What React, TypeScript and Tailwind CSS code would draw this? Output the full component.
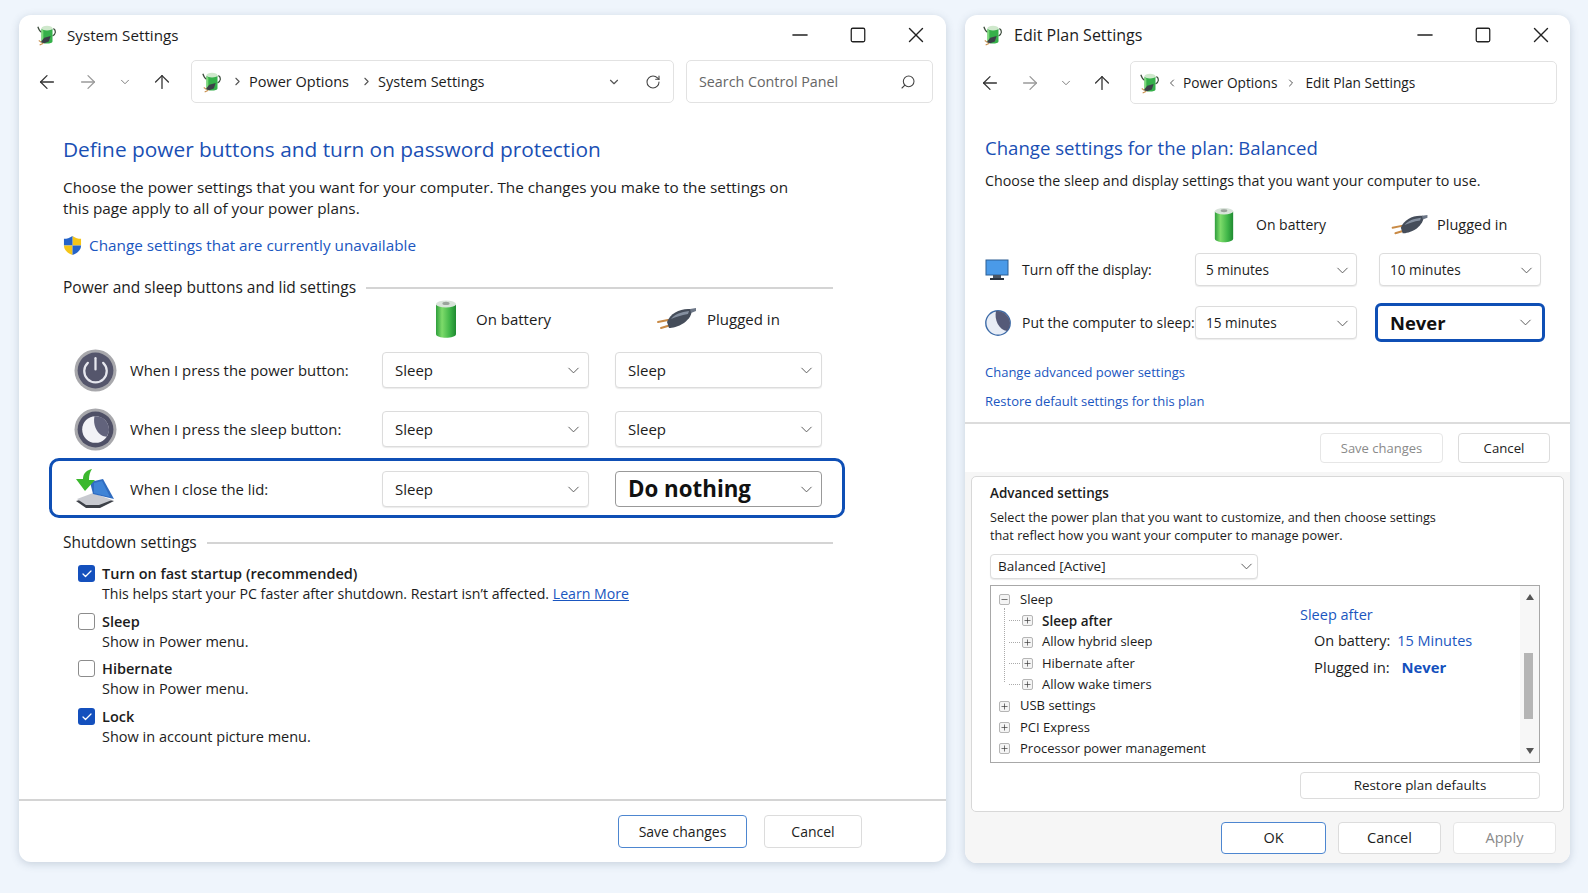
import { ChevronDown, RotateCw, Search, Minus, Square, X, ArrowLeft, ArrowRight, ArrowUp, ChevronRight, ChevronLeft, Check, Plus } from "lucide-react";
import type { ReactNode } from "react";

function AppIcon({ className }: { className?: string }) {
  return (
    <svg viewBox="0 0 24 24" className={className}>
      <path d="M2 3c1 3 2 5 4 6" stroke="#3a4a3a" strokeWidth="1.3" fill="none" />
      <path d="M19 5c3 2 3 6-1 8" stroke="#3a4a3a" strokeWidth="1.3" fill="none" />
      <path d="M6 5c0 1.5 12 1.5 12 0v14c0 3-12 3-12 0z" fill="#35b04a" />
      <path d="M6 6v13c0 1 1 1.6 2 2V7z" fill="#7cd97a" />
      <ellipse cx="12" cy="4.5" rx="6" ry="2.6" fill="#cfe8cc" />
      <path d="M5 20l4-5 7-2-2 6-5 2z" fill="#3b4048" />
      <path d="M3 18l3 2M4 23l4-2" stroke="#c9904f" strokeWidth="1.2" />
    </svg>
  );
}

function BatteryIcon({ className }: { className?: string }) {
  return (
    <svg viewBox="0 0 24 40" className={className}>
      <defs>
        <linearGradient id="batt" x1="0" x2="1" y1="0" y2="0">
          <stop offset="0" stopColor="#2f9e3c" />
          <stop offset="0.3" stopColor="#7ddb6a" />
          <stop offset="0.7" stopColor="#3fb548" />
          <stop offset="1" stopColor="#1f8a31" />
        </linearGradient>
      </defs>
      <path d="M2 5c0 3 20 3 20 0v30c0 5-20 5-20 0z" fill="url(#batt)" />
      <ellipse cx="12" cy="5" rx="10" ry="3.6" fill="#d9e3da" />
      <ellipse cx="12" cy="4.4" rx="3.6" ry="1.6" fill="#9aa39b" />
    </svg>
  );
}

function PlugIcon({ className }: { className?: string }) {
  return (
    <svg viewBox="0 0 40 24" className={className}>
      <path d="M1 15l10-2M4 21l10-3" stroke="#c98a45" strokeWidth="2" strokeLinecap="round" />
      <path d="M10 15C13 7 22 2 31 2h3c2 5-2 10-7 14-6 4-12 5-15 5z" fill="#454d5a" />
      <path d="M14 12c4-5 10-7 18-8l-1 3c-7 1-12 3-17 5z" fill="#8590a0" />
      <path d="M33 2l6-1v3l-5 2z" fill="#6c7686" />
    </svg>
  );
}

function PowerIcon({ className }: { className?: string }) {
  return (
    <svg viewBox="0 0 42 42" className={className}>
      <circle cx="21" cy="21" r="20.5" fill="#a8a8ac" />
      <circle cx="21" cy="21" r="17.5" fill="#55566c" />
      <path d="M13.5 13.5a11 11 0 1 0 15 0" stroke="#e6e7ee" strokeWidth="2.2" fill="none" strokeLinecap="round" />
      <path d="M21 9v11" stroke="#e6e7ee" strokeWidth="2.2" strokeLinecap="round" />
    </svg>
  );
}

function MoonBadge({ className }: { className?: string }) {
  return (
    <svg viewBox="0 0 42 42" className={className}>
      <circle cx="21" cy="21" r="20.5" fill="#a8a8ac" />
      <circle cx="21" cy="21" r="17.5" fill="#4f5066" />
      <circle cx="21" cy="21" r="13" fill="#f2f2f6" />
      <path d="M20 8a13 13 0 0 1 12 20C24 28 18 18 20 8z" fill="#62637c" />
    </svg>
  );
}

function LidIcon({ className }: { className?: string }) {
  return (
    <svg viewBox="0 0 42 40" className={className}>
      <path d="M2 32l18-5 20 5-14 7H12z" fill="#3d4148" />
      <path d="M3 30l16-6 19 7-13 5H12z" fill="#c8cad0" />
      <path d="M16 13l13-3 11 20-21-5z" fill="#2f6cc0" />
      <path d="M20 14l8-2 8 16-16-4z" fill="#3f84d6" />
      <path d="M18 0c-5 1-9 4-9 10H2l9 12 10-11h-6c0-5 1-8 3-11z" fill="#3bb82e" />
    </svg>
  );
}

function ShieldIcon({ className }: { className?: string }) {
  return (
    <svg viewBox="0 0 20 22" className={className}>
      <path d="M10 1c3 2 6 3 9 3v7H10z" fill="#f5c518" />
      <path d="M10 1C7 3 4 4 1 4v7h9z" fill="#2563c9" />
      <path d="M1 11c0 5 4 8 9 10V11z" fill="#f5c518" />
      <path d="M19 11c0 5-4 8-9 10V11z" fill="#2563c9" />
    </svg>
  );
}

function MonitorIcon({ className }: { className?: string }) {
  return (
    <svg viewBox="0 0 24 22" className={className}>
      <rect x="1" y="1" width="22" height="15" fill="#4a9ae8" stroke="#2c5f94" />
      <path d="M8 16h8v3H8z" fill="#4a5563" />
      <path d="M5 19h14v2H5z" fill="#2a3340" />
    </svg>
  );
}

function MoonSmall({ className }: { className?: string }) {
  return (
    <svg viewBox="0 0 26 26" className={className}>
      <circle cx="13" cy="13" r="12.2" fill="#e8edf6" stroke="#3e6ca8" strokeWidth="1.4" />
      <path d="M11 1c7-1 14 5 14 12 0 3-1 6-3 8C14 20 9 10 11 1z" fill="#555a78" />
    </svg>
  );
}

function WindowControls() {
  return (
    <div className="flex items-center text-[#222]">
      <div className="w-[58px] flex justify-center"><Minus className="w-[24px] h-[24px]" strokeWidth={1.6} /></div>
      <div className="w-[58px] flex justify-center"><Square className="w-[18px] h-[18px]" strokeWidth={1.7} /></div>
      <div className="w-[58px] flex justify-center"><X className="w-[26px] h-[26px]" strokeWidth={1.3} /></div>
    </div>
  );
}

function NavArrows({ gap }: { gap: string }) {
  return (
    <div className={`flex items-center text-[#333] ${gap}`}>
      <ArrowLeft className="w-[22px] h-[22px]" strokeWidth={1.4} />
      <ArrowRight className="w-[22px] h-[22px] text-[#9a9a9a]" strokeWidth={1.4} />
      <ChevronDown className="w-[14px] h-[14px] text-[#777]" strokeWidth={1.6} />
      <ArrowUp className="w-[22px] h-[22px]" strokeWidth={1.4} />
    </div>
  );
}

function Dropdown({ value, w, h = "h-[36px]", px = "pl-[12px]", pr = "pr-[5px]", text = "text-[15px]" }: { value: string; w: string; h?: string; px?: string; pr?: string; text?: string }) {
  return (
    <div className={`flex items-center justify-between ${w} ${h} ${px} ${pr} ${text} bg-white border border-[#dcdcdc] rounded-[4px] shadow-[0_1px_1px_rgba(0,0,0,0.08)] text-[#1c1c1c]`}>
      <span>{value}</span>
      <ChevronDown className="w-[19px] h-[19px] text-[#555]" strokeWidth={1.2} />
    </div>
  );
}

function PowerRow({ icon, label, first, second }: { icon: ReactNode; label: string; first: string; second?: ReactNode }) {
  return (
    <div className="flex items-center h-[36px]">
      <div className="w-[78px] h-[36px] flex items-center justify-center pl-[8px]">{icon}</div>
      <div className="w-[252px] text-[14.85px] text-[#1c1c1c]">{label}</div>
      <Dropdown value={first} w="w-[207px]" />
      <div className="w-[26px]" />
      {second ?? <Dropdown value="Sleep" w="w-[207px]" />}
    </div>
  );
}

function SectionHead({ title }: { title: string }) {
  return (
    <div className="flex items-center h-[20px] text-[15.5px] text-[#1c1c1c]">
      <span>{title}</span>
      <div className="flex-1 h-[2px] bg-[#d4d4d4] ml-[10px]" />
    </div>
  );
}

function CheckRow({ on, title, children }: { on?: boolean; title: string; children: ReactNode }) {
  return (
    <div className="flex">
      <div className={`w-[17px] h-[17px] mt-[1px] rounded-[3px] flex items-center justify-center ${on ? "bg-[#1450bd]" : "bg-white border border-[#8c8c8c]"}`}>
        {on && <Check className="w-[12px] h-[12px] text-white" strokeWidth={2.5} />}
      </div>
      <div className="ml-[7px] text-[14.5px] leading-[20px] text-[#1c1c1c]">
        <div className="font-semibold">{title}</div>
        <div>{children}</div>
      </div>
    </div>
  );
}

function Btn({ label, w, h, text = "text-[14px]", variant = "normal" }: { label: string; w: string; h: string; text?: string; variant?: "normal" | "primary" | "disabled" }) {
  const look =
    variant === "primary"
      ? "border-[1.5px] border-[#4d86d0] text-[#1c1c1c]"
      : variant === "disabled"
        ? "border border-[#e6e6e6] bg-[#fafafa] text-[#8a8a8a]"
        : "border border-[#dcdcdc] text-[#1c1c1c]";
  return <div className={`flex items-center justify-center rounded-[4px] bg-white ${text} ${w} ${h} ${look}`}>{label}</div>;
}

function TreeBox({ open }: { open?: boolean }) {
  return (
    <div className="w-[11px] h-[11px] border border-[#b5b5b5] bg-[#f4f4f4] rounded-[2px] flex items-center justify-center text-[#333]">
      {open ? <Minus className="w-[9px] h-[9px]" strokeWidth={1.8} /> : <Plus className="w-[9px] h-[9px]" strokeWidth={1.8} />}
    </div>
  );
}

function TreeRow({ label, child, bold, open }: { label: string; child?: boolean; bold?: boolean; open?: boolean }) {
  return (
    <div className={`flex items-center h-[21.3px] ${child ? "pl-[31px]" : "pl-[8px]"}`}>
      {child && <div className="w-[11px] -ml-[13px] mr-[2px] border-t border-dotted border-[#aaa]" />}
      <TreeBox open={open} />
      <span className={`${child ? "ml-[9px]" : "ml-[10px]"} ${bold ? "text-[13.5px] font-semibold" : "text-[13px]"} text-[#1c1c1c]`}>{label}</span>
    </div>
  );
}

function SystemSettings() {
  return (
    <div className="w-[927px] h-[847px] bg-white rounded-[12px] shadow-[0_2px_8px_rgba(60,80,110,0.22)] flex flex-col">
      <div className="h-[40px] flex items-center justify-between pl-[17px] pr-[1px]">
        <div className="flex items-center pt-[1px]">
          <AppIcon className="w-[22px] h-[22px]" />
          <span className="ml-[9px] text-[15.2px] text-[#1c1c1c]">System Settings</span>
        </div>
        <WindowControls />
      </div>
      <div className="mt-[5px] h-[43px] flex items-center pl-[17px] pr-[13px]">
        <NavArrows gap="gap-[19px]" />
        <div className="ml-[18px] w-[483px] h-[43px] flex items-center border border-[#e2e2e2] rounded-[5px] pl-[9px] pr-[12px] text-[14.5px] text-[#1c1c1c]">
          <AppIcon className="w-[22px] h-[22px]" />
          <ChevronRight className="w-[13px] h-[13px] ml-[8px] text-[#555]" />
          <span className="ml-[5px]">Power Options</span>
          <ChevronRight className="w-[13px] h-[13px] ml-[11px] text-[#555]" />
          <span className="ml-[5px]">System Settings</span>
          <ChevronDown className="w-[14px] h-[14px] ml-auto text-[#555]" />
          <RotateCw className="w-[16px] h-[16px] ml-[24px] text-[#444]" strokeWidth={1.6} />
        </div>
        <div className="ml-[12px] flex-1 h-[43px] flex items-center justify-between border border-[#e2e2e2] rounded-[5px] pl-[12px] pr-[16px] text-[14.3px] text-[#666]">
          <span>Search Control Panel</span>
          <Search className="w-[16px] h-[16px] text-[#444] -scale-x-100" strokeWidth={1.6} />
        </div>
      </div>
      <div className="pl-[44px] pr-[113px]">
        <h1 className="mt-[31px] text-[20.85px] leading-[30px] text-[#1a4fb4]">Define power buttons and turn on password protection</h1>
        <p className="mt-[13px] text-[15.3px] leading-[21px] text-[#1c1c1c] w-[735px]">
          Choose the power settings that you want for your computer. The changes you make to the settings on this page apply to all of your power plans.
        </p>
        <div className="mt-[14px] h-[24px] flex items-center text-[15.3px] text-[#1a56c0]">
          <ShieldIcon className="w-[19px] h-[21px] mr-[7px]" />
          Change settings that are currently unavailable
        </div>
        <div className="mt-[21px]">
          <SectionHead title="Power and sleep buttons and lid settings" />
        </div>
        <div className="mt-[2px] h-[38px] flex items-center text-[15px] text-[#1c1c1c]">
          <div className="ml-[371px] w-[24px]"><BatteryIcon className="w-[24px] h-[40px]" /></div>
          <span className="ml-[18px]">On battery</span>
          <PlugIcon className="w-[42px] h-[24px] ml-[105px]" />
          <span className="ml-[9px]">Plugged in</span>
        </div>
      </div>
      <div className="ml-[30px] w-[796px] mt-[14px] flex flex-col">
        <div className="pl-[3px]"><PowerRow icon={<PowerIcon className="w-[43px] h-[43px] shrink-0" />} label="When I press the power button:" first="Sleep" /></div>
        <div className="pl-[3px] mt-[23px]"><PowerRow icon={<MoonBadge className="w-[43px] h-[43px] shrink-0" />} label="When I press the sleep button:" first="Sleep" /></div>
        <div className="mt-[11px] h-[60px] border-[3px] border-[#0f4fb5] rounded-[10px] pt-[10px]">
          <PowerRow
            icon={<LidIcon className="w-[42px] h-[40px] shrink-0" />}
            label="When I close the lid:"
            first="Sleep"
            second={
              <div className="flex items-center justify-between w-[207px] h-[36px] pl-[12px] pr-[5px] bg-white border border-[#999] rounded-[4px]">
                <span className="text-[22.3px] font-bold text-[#111]">Do nothing</span>
                <ChevronDown className="w-[19px] h-[19px] text-[#555]" strokeWidth={1.2} />
              </div>
            }
          />
        </div>
      </div>
      <div className="pl-[44px] pr-[113px] mt-[15px]">
        <SectionHead title="Shutdown settings" />
        <div className="mt-[11px] pl-[15px] flex flex-col gap-[7.7px]">
          <CheckRow on title="Turn on fast startup (recommended)">
            <span className="text-[14.15px]">
              This helps start your PC faster after shutdown. Restart isn’t affected.{" "}
              <span className="text-[#1a56c0] underline">Learn More</span>
            </span>
          </CheckRow>
          <CheckRow title="Sleep">Show in Power menu.</CheckRow>
          <CheckRow title="Hibernate">Show in Power menu.</CheckRow>
          <CheckRow on title="Lock">Show in account picture menu.</CheckRow>
        </div>
      </div>
      <div className="mt-auto h-[63px] border-t-2 border-[#d4d4d4] flex justify-end items-start pt-[14px] pr-[84px] gap-[17px]">
        <Btn label="Save changes" w="w-[129px]" h="h-[33px]" variant="primary" />
        <Btn label="Cancel" w="w-[98px]" h="h-[33px]" />
      </div>
    </div>
  );
}

function EditPlan() {
  return (
    <div className="w-[605px] h-[848px] bg-white rounded-[12px] shadow-[0_2px_8px_rgba(60,80,110,0.22)] flex flex-col overflow-hidden">
      <div className="h-[40px] flex items-center justify-between pl-[17px]">
        <div className="flex items-center">
          <AppIcon className="w-[22px] h-[22px]" />
          <span className="ml-[10px] text-[16px] text-[#1c1c1c]">Edit Plan Settings</span>
        </div>
        <WindowControls />
      </div>
      <div className="mt-[6px] h-[43px] flex items-center pl-[14px] pr-[13px]">
        <NavArrows gap="gap-[18px]" />
        <div className="ml-[17px] flex-1 h-[43px] flex items-center border border-[#e2e2e2] rounded-[5px] pl-[8px] pt-[1px] text-[13.7px] text-[#1c1c1c]">
          <AppIcon className="w-[22px] h-[22px]" />
          <ChevronLeft className="w-[12px] h-[12px] ml-[5px] text-[#555]" />
          <span className="ml-[5px]">Power Options</span>
          <ChevronRight className="w-[12px] h-[12px] ml-[8px] text-[#555]" />
          <span className="ml-[8px]">Edit Plan Settings</span>
        </div>
      </div>
      <div className="pl-[20px] text-[#1c1c1c]">
        <h2 className="mt-[30px] text-[18.6px] leading-[28px] text-[#1a4fb4]">Change settings for the plan: Balanced</h2>
        <p className="mt-[9px] text-[14.27px] leading-[20px]">Choose the sleep and display settings that you want your computer to use.</p>
        <div className="mt-[16px] h-[35px] flex items-center text-[14px]">
          <BatteryIcon className="w-[22px] h-[38px] ml-[228px]" />
          <span className="ml-[21px]">On battery</span>
          <PlugIcon className="w-[38px] h-[22px] ml-[65px]" />
          <span className="ml-[8px] text-[14.5px]">Plugged in</span>
        </div>
        <div className="mt-[11px] flex items-center">
          <MonitorIcon className="w-[24px] h-[22px]" />
          <span className="ml-[13px] w-[173px] pt-[2px] text-[13.95px]">Turn off the display:</span>
          <Dropdown value="5 minutes" w="w-[162px]" h="h-[33px] pt-[2px]" px="pl-[10px]" pr="pr-[4px]" text="text-[13.6px]" />
          <div className="w-[22px]" />
          <Dropdown value="10 minutes" w="w-[162px]" h="h-[33px] pt-[2px]" px="pl-[10px]" pr="pr-[4px]" text="text-[13.6px]" />
        </div>
        <div className="mt-[20px] flex items-center">
          <MoonSmall className="w-[26px] h-[26px]" />
          <span className="ml-[11px] w-[173px] pt-[1px] text-[13.95px] whitespace-nowrap">Put the computer to sleep:</span>
          <Dropdown value="15 minutes" w="w-[162px]" h="h-[33px] pt-[1px]" px="pl-[10px]" pr="pr-[4px]" text="text-[13.6px]" />
          <div className="w-[22px]" />
          <div className="-mx-[4px] -my-[3px] flex items-center justify-between w-[170px] h-[39px] pl-[12px] pr-[7px] bg-white border-[3px] border-[#0f4fb5] rounded-[6px]">
            <span className="text-[18.4px] font-bold text-[#111]">Never</span>
            <ChevronDown className="w-[19px] h-[19px] text-[#555]" strokeWidth={1.2} />
          </div>
        </div>
        <div className="mt-[23px] h-[20px] text-[13px] leading-[20px] text-[#1a56c0]">Change advanced power settings</div>
        <div className="mt-[9px] h-[20px] text-[13px] leading-[20px] text-[#1a56c0]">Restore default settings for this plan</div>
      </div>
      <div className="mt-[11px] h-[50px] border-t-2 border-[#dcdcdc] flex justify-end pt-[9px] pr-[20px] gap-[15px]">
        <Btn label="Save changes" w="w-[123px]" h="h-[30px] pt-[1px]" text="text-[13px]" variant="disabled" />
        <Btn label="Cancel" w="w-[92px]" h="h-[30px] pt-[1px]" text="text-[13.2px]" />
      </div>
      <div className="flex-1 bg-[#f6f6f6] px-[6px] pt-[4px] flex flex-col">
        <div className="h-[336px] bg-white border border-[#d8d8d8] rounded-[5px] pl-[18px] pr-[23px] pt-[6px] text-[#1c1c1c]">
          <div className="text-[13.5px] font-semibold leading-[20px]">Advanced settings</div>
          <p className="mt-[5px] text-[12.7px] leading-[18px] w-[450px]">
            Select the power plan that you want to customize, and then choose settings that reflect how you want your computer to manage power.
          </p>
          <Dropdown value="Balanced [Active]" w="w-[268px] mt-[10px]" h="h-[25px]" px="pl-[7px]" pr="pr-[1px]" text="text-[13.5px]" />
          <div className="mt-[6px] h-[178px] border border-[#a8a8a8] flex relative">
            <div className="flex-1 pt-[3px] relative">
              <div className="absolute left-[13px] top-[22px] h-[74px] border-l border-dotted border-[#aaa]" />
              <TreeRow label="Sleep" open />
              <TreeRow label="Sleep after" child bold />
              <TreeRow label="Allow hybrid sleep" child />
              <TreeRow label="Hibernate after" child />
              <TreeRow label="Allow wake timers" child />
              <TreeRow label="USB settings" />
              <TreeRow label="PCI Express" />
              <TreeRow label="Processor power management" />
            </div>
            <div className="absolute left-[309px] top-[19px] text-[14.5px]">
              <div className="text-[#1a56c0] leading-[20px]">Sleep after</div>
              <div className="ml-[14px] mt-[6px] leading-[20px] whitespace-nowrap">
                On battery: <span className="ml-[3px] text-[#1a56c0]">15 Minutes</span>
              </div>
              <div className="ml-[14px] mt-[6px] leading-[20px] text-[14.8px] font-medium whitespace-nowrap">
                Plugged in: <span className="ml-[8px] font-bold text-[#1450bd]">Never</span>
              </div>
            </div>
            <div className="w-[19px] bg-[#f7f7f7] flex flex-col items-center justify-between py-[8px] relative">
              <div className="w-0 h-0 border-x-[4px] border-x-transparent border-b-[6px] border-b-[#555]" />
              <div className="absolute top-[67px] left-[4px] w-[9px] h-[66px] bg-[#b5b5b5]" />
              <div className="w-0 h-0 border-x-[4px] border-x-transparent border-t-[6px] border-t-[#555]" />
            </div>
          </div>
          <div className="mt-[9px] flex justify-end">
            <Btn label="Restore plan defaults" w="w-[240px]" h="h-[27px]" text="text-[13.4px]" />
          </div>
        </div>
        <div className="mt-[10px] flex justify-end pr-[8px] gap-[12px]">
          <Btn label="OK" w="w-[105px]" h="h-[32px]" text="text-[14.5px]" variant="primary" />
          <Btn label="Cancel" w="w-[103px]" h="h-[32px]" text="text-[14.5px]" />
          <Btn label="Apply" w="w-[103px]" h="h-[32px]" text="text-[14.5px]" variant="disabled" />
        </div>
      </div>
    </div>
  );
}

export default function App() {
  return (
    <div className="w-[1588px] h-[893px] overflow-hidden bg-[#eff5fc] pt-[15px] pl-[19px] flex gap-[19px] items-start font-['Open_Sans','Noto_Sans',sans-serif]">
      <SystemSettings />
      <EditPlan />
    </div>
  );
}
